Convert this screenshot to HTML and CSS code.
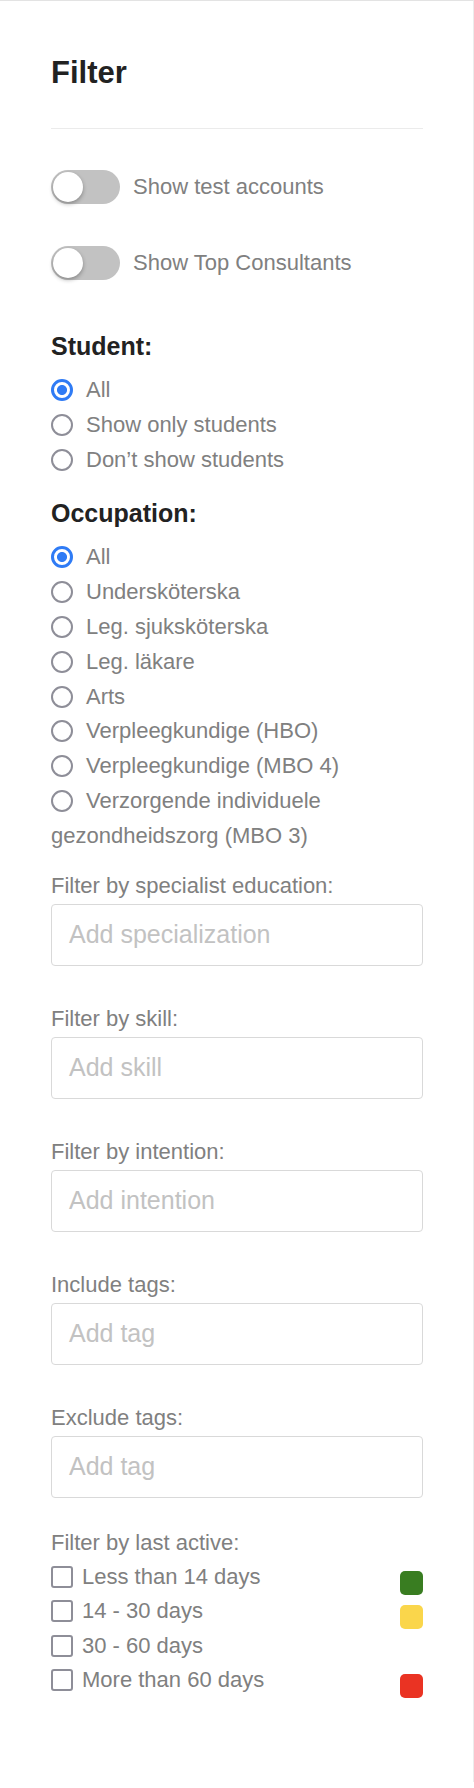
FILE: index.html
```html
<!DOCTYPE html>
<html>
<head>
<meta charset="utf-8">
<link rel="stylesheet" href="styles.css">
</head>
<body>
<div class="panel">
  <h1 class="title">Filter</h1>
  <div class="divider"></div>

  <div class="toggle-row">
    <span class="toggle"><span class="knob"></span></span>
    <span class="toggle-label">Show test accounts</span>
  </div>
  <div class="toggle-row toggle-row-2">
    <span class="toggle"><span class="knob"></span></span>
    <span class="toggle-label">Show Top Consultants</span>
  </div>

  <h2 class="section-title student-title">Student:</h2>
  <div class="radio-list">
    <div class="radio-row"><span class="radio radio-on"></span>All</div>
    <div class="radio-row"><span class="radio"></span>Show only students</div>
    <div class="radio-row"><span class="radio"></span>Don’t show students</div>
  </div>

  <h2 class="section-title occ-title">Occupation:</h2>
  <div class="radio-list">
    <div class="radio-row"><span class="radio radio-on"></span>All</div>
    <div class="radio-row"><span class="radio"></span>Undersköterska</div>
    <div class="radio-row"><span class="radio"></span>Leg. sjuksköterska</div>
    <div class="radio-row"><span class="radio"></span>Leg. läkare</div>
    <div class="radio-row"><span class="radio"></span>Arts</div>
    <div class="radio-row"><span class="radio"></span>Verpleegkundige (HBO)</div>
    <div class="radio-row"><span class="radio"></span>Verpleegkundige (MBO 4)</div>
    <div class="radio-row"><span class="radio"></span>Verzorgende individuele gezondheidszorg (MBO 3)</div>
  </div>

  <div class="field first-field">
    <div class="field-label">Filter by specialist education:</div>
    <div class="input"><span class="placeholder">Add specialization</span></div>
  </div>
  <div class="field">
    <div class="field-label">Filter by skill:</div>
    <div class="input"><span class="placeholder">Add skill</span></div>
  </div>
  <div class="field">
    <div class="field-label">Filter by intention:</div>
    <div class="input"><span class="placeholder">Add intention</span></div>
  </div>
  <div class="field">
    <div class="field-label">Include tags:</div>
    <div class="input"><span class="placeholder">Add tag</span></div>
  </div>
  <div class="field last-field">
    <div class="field-label">Exclude tags:</div>
    <div class="input"><span class="placeholder">Add tag</span></div>
  </div>

  <div class="field-label">Filter by last active:</div>
  <div class="check-list">
    <div class="check-row">
      <span class="check-label"><span class="checkbox"></span>Less than 14 days</span>
      <span class="dot dot-green"></span>
    </div>
    <div class="check-row">
      <span class="check-label"><span class="checkbox"></span>14 - 30 days</span>
      <span class="dot dot-yellow"></span>
    </div>
    <div class="check-row">
      <span class="check-label"><span class="checkbox"></span>30 - 60 days</span>
    </div>
    <div class="check-row">
      <span class="check-label"><span class="checkbox"></span>More than 60 days</span>
      <span class="dot dot-red"></span>
    </div>
  </div>
</div>
</body>
</html>
```

FILE: styles.css
```css
* { box-sizing: border-box; }
html, body { margin: 0; padding: 0; background: #fff; }
body {
  font-family: "Liberation Sans", Arial, Helvetica, sans-serif;
  color: #808080;
  font-size: 22px;
}
.panel {
  width: 474px;
  height: 1782px;
  border-top: 1px solid #e3e3e3;
  border-right: 1px solid #ececec;
  padding: 54px 50px 0 51px;
}
.title {
  margin: 0;
  font-size: 31px;
  line-height: 36px;
  font-weight: bold;
  color: #222;
}
.divider {
  margin-top: 37px;
  height: 1px;
  background: #ebebeb;
}
.toggle-row {
  margin-top: 41px;
  display: flex;
  align-items: center;
  height: 34px;
}
.toggle-row-2 { margin-top: 42px; }
.toggle {
  position: relative;
  width: 69px;
  height: 34px;
  border-radius: 17px;
  background: #c2c2c2;
  flex: none;
}
.knob {
  position: absolute;
  left: 2px;
  top: 2px;
  width: 30px;
  height: 30px;
  border-radius: 50%;
  background: #fff;
  box-shadow: 0 2px 4px rgba(0,0,0,0.3);
}
.toggle-label {
  margin-left: 13px;
  line-height: 32px;
}
.section-title {
  margin: 0;
  font-size: 25px;
  line-height: 35px;
  font-weight: bold;
  color: #222;
}
.student-title { margin-top: 49px; }
.occ-title { margin-top: 19px; }
.radio-list { margin-top: 9px; }
.radio-row {
  line-height: 34.8px;
}
.radio {
  display: inline-block;
  width: 22px;
  height: 22px;
  border-radius: 50%;
  border: 2px solid #8e8e98;
  margin-right: 13px;
  vertical-align: -4px;
  background: #fff;
}
.radio-on {
  border: 3px solid #2f7bf5;
  background: radial-gradient(circle, #2f7bf5 0, #2f7bf5 4.6px, #fff 5.4px);
}
.field-label {
  line-height: 35px;
}
.first-field { margin-top: 14px; }
.field { margin-bottom: 35px; }
.last-field { margin-bottom: 27px; }
.input {
  margin-top: 1px;
  height: 62px;
  border: 1px solid #d9d9d9;
  border-radius: 4px;
  padding: 0 17px;
  display: flex;
  align-items: center;
}
.placeholder {
  font-size: 25px;
  color: #c2c2c2;
  line-height: 29px;
}
.check-row {
  display: flex;
  justify-content: space-between;
  align-items: flex-start;
  height: 34.5px;
  line-height: 34.5px;
}
.checkbox {
  display: inline-block;
  width: 22px;
  height: 22px;
  border: 2px solid #8e8e98;
  border-radius: 3px;
  margin-right: 9px;
  vertical-align: -4px;
}
.dot {
  width: 23px;
  height: 24px;
  border-radius: 5px;
  margin-top: 11px;
}
.dot-green { background: #397d21; }
.dot-yellow { background: #fad64b; }
.dot-red { background: #ea3323; }
```
